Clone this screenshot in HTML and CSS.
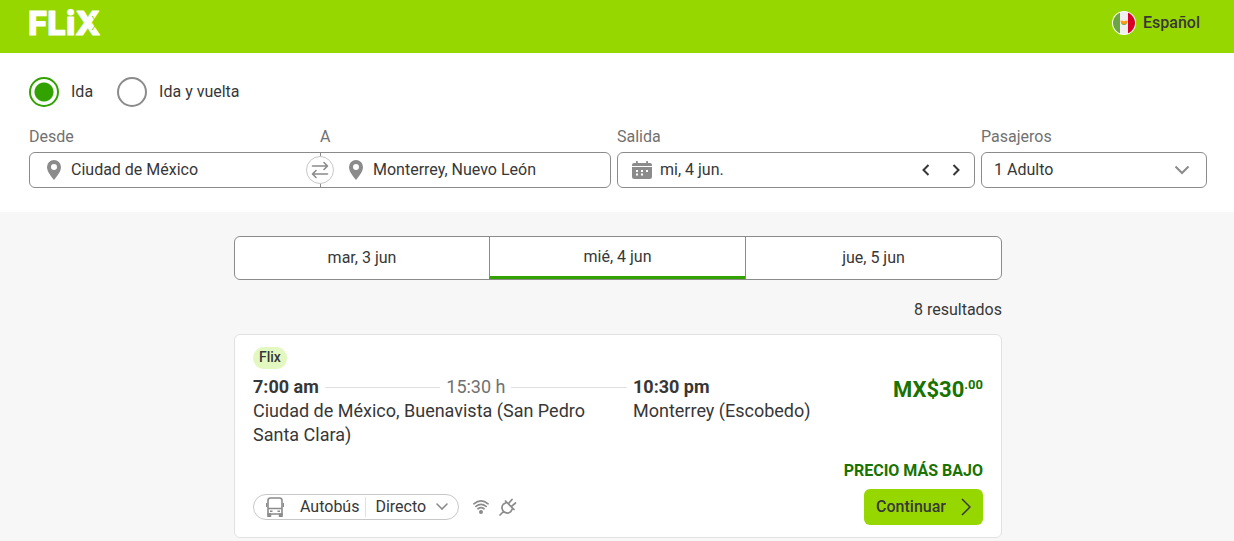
FILE: index.html
```html
<!DOCTYPE html>
<html lang="es">
<head>
<meta charset="utf-8">
<meta name="viewport" content="width=device-width, initial-scale=1">
<title>Ciudad de México – Monterrey | Flix</title>
<link rel="stylesheet" href="styles.css">
</head>
<body>
<header class="header">
  <a class="logo" href="#" aria-label="Flix">
    <svg width="80" height="44" viewBox="0 0 80 44">
      <text class="logo-text" x="-1" y="34">FLiX</text>
      <path class="logo-cut" d="M63 15l5 7-5 7"/>
    </svg>
  </a>
  <button class="language" type="button">
    <svg width="24" height="24" viewBox="0 0 24 24" aria-hidden="true">
      <defs><clipPath id="flag"><circle cx="12" cy="12" r="11"/></clipPath></defs>
      <circle cx="12" cy="12" r="12" fill="#fff"/>
      <g clip-path="url(#flag)">
        <path fill="#6da544" d="M0 0h8v24H0z"/>
        <path fill="#f0f0f0" d="M8 0h8v24H8z"/>
        <path fill="#d80027" d="M16 0h8v24h-8z"/>
        <path fill="#6da544" d="M9 11h6a3 3 0 0 1-6 0z"/>
        <path fill="#ff9811" d="M8.300 9.700h2.500l1.200.9 1.200-.9h2.500l-1 2.300-1.400 1h-2.600l-1.400-1z"/>
      </g>
    </svg>
    <span>Español</span>
  </button>
</header>

<form class="search">
  <fieldset class="trip">
    <label class="trip-option"><input class="radio" type="radio" name="trip" checked><span>Ida</span></label>
    <label class="trip-option"><input class="radio" type="radio" name="trip"><span>Ida y vuelta</span></label>
  </fieldset>
  <div class="fields">
    <div class="route">
      <label class="label" for="from">Desde</label>
      <label class="label" for="to">A</label>
      <div class="box route-box">
        <div class="place">
          <svg class="grey" width="14" height="20" viewBox="0 0 14 20" aria-hidden="true"><path fill-rule="evenodd" d="M7 0a7 7 0 0 0-7 7c0 5 4.500 9.500 7 13 2.500-3.500 7-8 7-13a7 7 0 0 0-7-7zm0 4a3 3 0 1 1 0 6 3 3 0 0 1 0-6z"/></svg>
          <input class="text" id="from" type="text" value="Ciudad de México">
        </div>
        <div class="place place-to">
          <svg class="grey" width="14" height="20" viewBox="0 0 14 20" aria-hidden="true"><path fill-rule="evenodd" d="M7 0a7 7 0 0 0-7 7c0 5 4.500 9.500 7 13 2.500-3.500 7-8 7-13a7 7 0 0 0-7-7zm0 4a3 3 0 1 1 0 6 3 3 0 0 1 0-6z"/></svg>
          <input class="text" id="to" type="text" value="Monterrey, Nuevo León">
        </div>
        <button class="swap" type="button" aria-label="Intercambiar">
          <svg width="18" height="18" viewBox="0 0 18 18" fill="none" stroke="#8b8b8b" stroke-width="1.600" stroke-linecap="round" stroke-linejoin="round"><path d="M1.500 5h15M13 1.500L16.500 5 13 8.500M16.500 13h-15M5 9.500L1.500 13 5 16.500"/></svg>
        </button>
      </div>
    </div>
    <div class="field">
      <label class="label" for="date">Salida</label>
      <div class="box date-box">
        <svg width="20" height="18" viewBox="0 0 20 18" aria-hidden="true">
          <path fill="#8b8b8b" d="M0 4a2 2 0 0 1 2-2h2V.8a.9.9 0 0 1 1.800 0V2h8.400V.8a.9.9 0 0 1 1.800 0V2h2a2 2 0 0 1 2 2v1H0zM0 6h20v9.500a2.500 2.500 0 0 1-2.500 2.500h-15A2.500 2.500 0 0 1 0 15.500z"/>
          <path fill="#fff" d="M4 9h2v2H4zM9 9h2v2H9zM14 9h2v2h-2zM4 12.500h2v2H4zM9 12.500h2v2H9z"/>
        </svg>
        <input class="text" id="date" type="text" value="mi, 4 jun.">
        <button class="step" type="button" aria-label="Día anterior"><svg width="8" height="12" viewBox="0 0 8 12"><path d="M6.500 1L1.500 6l5 5"/></svg></button>
        <button class="step" type="button" aria-label="Día siguiente"><svg width="8" height="12" viewBox="0 0 8 12"><path d="M1.500 1l5 5-5 5"/></svg></button>
      </div>
    </div>
    <div class="field">
      <label class="label" for="passengers">Pasajeros</label>
      <div class="box select-box">
        <select class="select" id="passengers"><option>1 Adulto</option><option>2 Adultos</option></select>
        <svg class="select-arrow" width="16" height="10" viewBox="0 0 16 10" aria-hidden="true"><path d="M1.500 1.500L8 8l6.500-6.500"/></svg>
      </div>
    </div>
  </div>
</form>

<main class="results">
  <div class="results-inner">
    <nav class="days">
      <button class="day" type="button">mar, 3 jun</button>
      <button class="day day-active" type="button">mié, 4 jun</button>
      <button class="day" type="button">jue, 5 jun</button>
    </nav>
    <p class="count">8 resultados</p>
    <article class="card">
      <span class="brand">Flix</span>
      <div class="journey">
        <div>
          <div class="times"><strong>7:00 am</strong><i class="line"></i><span class="duration">15:30 h</span><i class="line"></i></div>
          <div>Ciudad de México, Buenavista (San Pedro Santa Clara)</div>
        </div>
        <div>
          <strong>10:30 pm</strong>
          <div>Monterrey (Escobedo)</div>
        </div>
        <div class="price">MX$30<sup class="cents">.00</sup></div>
      </div>
      <p class="lowest">PRECIO MÁS BAJO</p>
      <div class="footer">
        <button class="details" type="button">
          <svg width="18" height="20" viewBox="0 0 18 20" aria-hidden="true">
            <path fill="none" stroke="#8b8b8b" stroke-width="1.600" d="M2 18V3.500Q2 1 4.500 1h9Q16 1 16 3.500V18M2 11.500h14M2 17h14"/>
            <path fill="#8b8b8b" d="M0 6h1.200v4H0zM16.800 6H18v4h-1.200zM1.200 16.500h4V20h-4zM12.800 16.500h4V20h-4zM4 13.500h2.500V15H4zM11.500 13.500H14V15h-2.500z"/>
          </svg>
          <span class="mode">Autobús</span>
          <span class="direct">Directo</span>
          <svg width="12" height="8" viewBox="0 0 12 8" fill="none" stroke="#8b8b8b" stroke-width="1.600" stroke-linecap="round" aria-hidden="true"><path d="M1 1l5 5 5-5"/></svg>
        </button>
        <svg width="16" height="14" viewBox="0 0 16 14" aria-label="Wi-Fi"><path fill="none" stroke="#8b8b8b" stroke-width="1.700" stroke-linecap="round" d="M.9 3.800q7.100-5.800 14.200 0M2.900 6.400q5.100-4 10.200 0M5 8.800q3-2.200 6 0"/><circle cx="8" cy="12" r="2" fill="#8b8b8b"/></svg>
        <svg width="18" height="18" viewBox="0 0 18 18" fill="none" stroke="#8b8b8b" stroke-width="1.700" stroke-linecap="round" stroke-linejoin="round" aria-label="Enchufes"><path d="M1 17l3.500-3.500M6.500 3l8.500 8.500M7.800 4.300L4.300 6.200Q1.500 9.500 4.500 13.500q4 3 7.300.2l1.900-3.500M9.800 5.200L13 1.500M12.800 8.200L16.500 5"/></svg>
        <button class="continue" type="button"><span>Continuar</span><svg width="10" height="18" viewBox="0 0 10 18" aria-hidden="true"><path d="M1 1l8 8-8 8"/></svg></button>
      </div>
    </article>
  </div>
</main>
</body>
</html>
```

FILE: styles.css
```css
* { box-sizing: border-box; }
body {
  margin: 0;
  min-height: 100vh;
  background: #f7f7f7;
  color: #373737;
  font: 16px/24px Roboto, "Liberation Sans", sans-serif;
}
button, input, select { font: inherit; color: inherit; }
button { padding: 0; border: 0; background: none; cursor: pointer; }
svg { display: block; flex: none; }
p { margin: 0; }

.header {
  display: flex;
  align-items: center;
  justify-content: space-between;
  padding: 1px 34px 8px 29px;
  background: #97d700;
}
.logo-text {
  font: 800 33px Inter, "Liberation Sans", sans-serif;
  fill: #fff;
  stroke: #fff;
  stroke-width: 1;
  stroke-linejoin: round;
}
.logo-cut { fill: none; stroke: #97d700; stroke-width: 1; }
.language { display: flex; align-items: center; gap: 7px; font-weight: 500; }

.search { padding: 24px 27px 24px 29px; background: #fff; }
.trip { display: flex; gap: 24px; margin: 0 0 18px; padding: 0; border: 0; }
.trip-option { display: flex; align-items: center; gap: 12px; }
.radio {
  appearance: none;
  width: 30px;
  height: 30px;
  margin: 0;
  border: 2px solid #8b8b8b;
  border-radius: 50%;
  background: #fff;
}
.radio:checked {
  border-color: #31a200;
  background: radial-gradient(circle, #31a200 9px, #fff 10px);
}

.fields { display: grid; grid-template-columns: 582fr 358fr 226fr; gap: 6px; }
.route { display: grid; grid-template-columns: 1fr 1fr; row-gap: 3px; }
.field { display: grid; row-gap: 3px; }
.label { color: #717171; }
.box {
  display: flex;
  align-items: center;
  height: 36px;
  border: 1px solid #8b8b8b;
  border-radius: 6px;
  background: #fff;
}
.route-box { position: relative; grid-column: 1 / -1; }
.place {
  display: flex;
  width: 50%;
  align-items: center;
  align-self: stretch;
  gap: 10px;
  min-width: 0;
  padding-left: 17px;
}
.place-to { padding-left: 28px; border-left: 1px solid #8b8b8b; }
.grey { fill: #8b8b8b; }
.text {
  flex: 1;
  min-width: 0;
  height: 24px;
  padding: 0;
  border: 0;
  outline: 0;
  background: none;
}
.swap {
  position: absolute;
  top: 50%;
  left: 50%;
  display: grid;
  place-items: center;
  width: 28px;
  height: 28px;
  border: 1px solid #c8c8c8;
  border-radius: 50%;
  background: #fff;
  transform: translate(-50%, -50%);
}
.date-box { gap: 8px; padding: 0 7px 0 14px; }
.step { width: 22px; height: 24px; display: grid; place-items: center; }
.step path { fill: none; stroke: #373737; stroke-width: 2; }
.select-box { position: relative; }
.select {
  appearance: none;
  width: 100%;
  height: 34px;
  padding: 0 40px 0 12px;
  border: 0;
  border-radius: 6px;
  background: none;
}
.select-arrow { position: absolute; right: 16px; pointer-events: none; }
.select-arrow path { fill: none; stroke: #8b8b8b; stroke-width: 2; }

.results { padding: 24px 27px 3px 29px; }
.results-inner { max-width: 768px; margin: 0 auto; }
.days {
  display: grid;
  grid-template-columns: 254fr 256fr 256fr;
  height: 44px;
  overflow: hidden;
  border: 1px solid #8b8b8b;
  border-radius: 6px;
  background: #fff;
}
.day + .day { border-left: 1px solid #8b8b8b; }
.day-active { margin-bottom: -1px; border-bottom: 4px solid #31a200; }
.count { padding: 18px 0 12px; text-align: right; }

.card {
  padding: 12px 18px;
  border: 1px solid #e1e1e1;
  border-radius: 6px;
  background: #fff;
  font-size: 18px;
}
.brand {
  display: block;
  width: fit-content;
  padding: 0 6px 2px;
  border-radius: 11px;
  background: #e3f8c0;
  font-size: 14px;
  font-weight: 500;
  line-height: 20px;
}
.journey {
  display: grid;
  grid-template-columns: 374fr 200fr 144fr;
  gap: 6px;
  padding: 6px 0 12px;
}
.times { display: flex; align-items: center; gap: 6px; }
.line { flex: 1; height: 1px; background: #e1e1e1; }
.duration { color: #717171; }
.price {
  padding-top: 3px;
  color: #187300;
  font-size: 22px;
  font-weight: 700;
  text-align: right;
}
.cents { font-size: 13px; line-height: 1; }
.lowest {
  padding-bottom: 6px;
  color: #187300;
  font-size: 16px;
  font-weight: 700;
  text-align: right;
}
.footer { display: flex; align-items: center; gap: 10px; font-size: 16px; }
.details {
  display: flex;
  align-items: center;
  height: 26px;
  margin-right: 4px;
  padding: 0 10px 0 12px;
  border: 1px solid #c8c8c8;
  border-radius: 13px;
}
.mode { margin-left: 16px; padding-right: 6px; border-right: 1px solid #e1e1e1; line-height: 20px; }
.direct { margin: 0 10px 0 9px; }
.continue {
  display: flex;
  align-items: center;
  gap: 15px;
  height: 36px;
  margin-left: auto;
  padding: 0 12px;
  border-radius: 6px;
  background: #97d700;
  font-weight: 500;
}
.continue path { fill: none; stroke: #373737; stroke-width: 1.5; }
```
